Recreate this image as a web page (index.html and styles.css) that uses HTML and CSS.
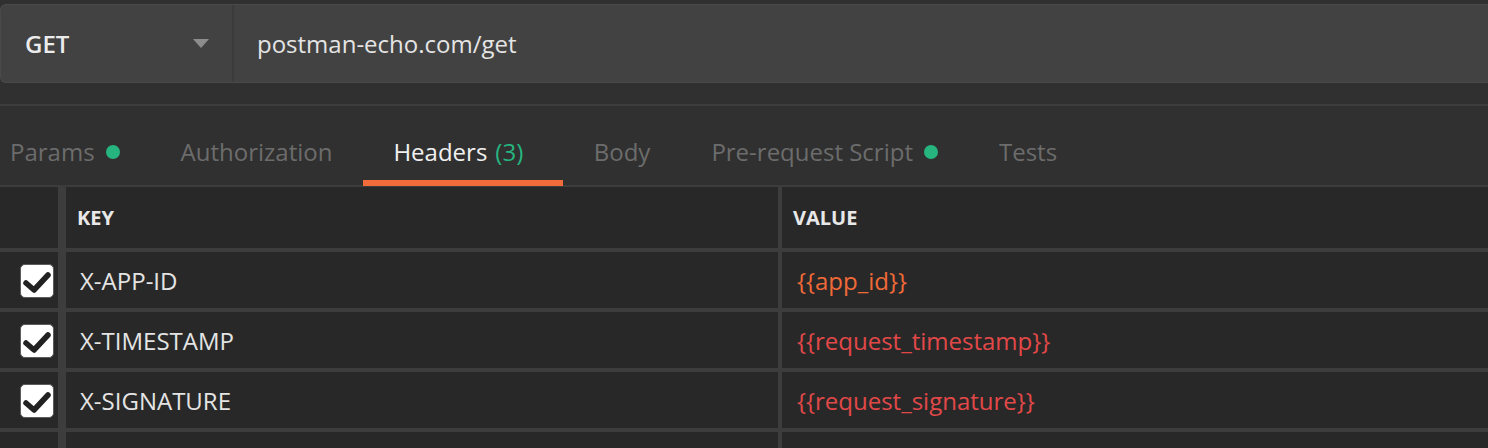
FILE: index.html
```html
<!DOCTYPE html>
<html lang="en">
<head>
<meta charset="utf-8">
<title>Request</title>
<link rel="stylesheet" href="styles.css">
</head>
<body>
<div class="app">
  <div class="request-bar">
    <div class="method">
      <span class="method-name">GET</span>
      <span class="caret"></span>
    </div>
    <div class="url">postman-echo.com/get</div>
  </div>

  <nav class="tabs">
    <div class="tab">Params<span class="dot"></span></div>
    <div class="tab">Authorization</div>
    <div class="tab active">Headers<span class="count">(3)</span></div>
    <div class="tab">Body</div>
    <div class="tab">Pre-request Script<span class="dot"></span></div>
    <div class="tab">Tests</div>
  </nav>

  <div class="table">
    <div class="row head">
      <div class="cell check"></div>
      <div class="cell key">KEY</div>
      <div class="cell value">VALUE</div>
    </div>
    <div class="row">
      <div class="cell check"><span class="box"><svg viewBox="0 0 34 34" width="34" height="34"><polyline points="6,19 14,26 28,11" /></svg></span></div>
      <div class="cell key">X-APP-ID</div>
      <div class="cell value var-found">{{app_id}}</div>
    </div>
    <div class="row">
      <div class="cell check"><span class="box"><svg viewBox="0 0 34 34" width="34" height="34"><polyline points="6,19 14,26 28,11" /></svg></span></div>
      <div class="cell key">X-TIMESTAMP</div>
      <div class="cell value var-missing">{{request_timestamp}}</div>
    </div>
    <div class="row">
      <div class="cell check"><span class="box"><svg viewBox="0 0 34 34" width="34" height="34"><polyline points="6,19 14,26 28,11" /></svg></span></div>
      <div class="cell key">X-SIGNATURE</div>
      <div class="cell value var-missing">{{request_signature}}</div>
    </div>
    <div class="row empty">
      <div class="cell check"></div>
      <div class="cell key"></div>
      <div class="cell value"></div>
    </div>
  </div>
</div>
</body>
</html>
```

FILE: styles.css
```css
* { box-sizing: border-box; }

html, body {
  margin: 0;
  padding: 0;
  background: #303030;
  overflow: hidden;
}

body {
  font-family: "Open Sans", "Noto Sans", sans-serif;
  font-size: 24px;
  color: #e6e6e6;
  width: 1488px;
  height: 448px;
}

.app {
  display: flex;
  flex-direction: column;
  padding-top: 4px;
}

/* request bar */
.request-bar {
  display: flex;
  height: 79px;
  background: #424242;
  border: 1px solid #4a4a4a;
  border-right: none;
  border-radius: 6px 0 0 6px;
}

.method {
  width: 233px;
  flex: none;
  display: flex;
  align-items: center;
  justify-content: space-between;
  padding: 0 23px 0 24px;
  border-right: 2px solid #3b3b3b;
}

.method-name {
  font-weight: 600;
  color: #ececec;
}

.caret {
  width: 0;
  height: 0;
  border-left: 8px solid transparent;
  border-right: 8px solid transparent;
  border-top: 9px solid #8d8d8d;
}

.url {
  flex: 1;
  display: flex;
  align-items: center;
  padding-left: 23px;
  color: #e4e4e4;
}

/* tabs */
.tabs {
  margin-top: 21px;
  border-top: 2px solid #3c3c3c;
  border-bottom: 2px solid #3c3c3c;
  height: 83px;
  display: flex;
  margin-left: -20.5px;
  padding-top: 12px;
}

.tab {
  position: relative;
  display: flex;
  align-items: center;
  padding: 0 30.5px;
  color: #6c6c6c;
  white-space: nowrap;
}

.tab.active {
  color: #f0f0f0;
  padding-right: 40px;
}

.tab.active::after {
  content: "";
  position: absolute;
  left: 0;
  right: 0;
  bottom: -1px;
  height: 6px;
  background: #f26b3a;
}

.dot {
  width: 14px;
  height: 14px;
  border-radius: 50%;
  background: #26b47f;
  margin-left: 11px;
}

.count {
  color: #26b47f;
  margin-left: 8px;
}

/* table */
.table {
  background: #282828;
  display: flex;
  flex-direction: column;
}

.row {
  display: flex;
  flex: none;
  height: 60px;
  border-bottom: 4px solid #3d3d3d;
}

.row.head {
  height: 65px;
}

.row.empty {
  border-bottom: none;
}

.cell {
  display: flex;
  align-items: center;
}

.check {
  width: 66px;
  flex: none;
  justify-content: flex-end;
  padding-right: 4px;
  border-right: 8px solid #3d3d3d;
}

.key {
  width: 716px;
  flex: none;
  padding-left: 14px;
  border-right: 4px solid #3d3d3d;
  color: #e4e4e4;
}

.value {
  flex: 1;
  padding-left: 15px;
}

.head .cell {
  font-weight: 700;
  font-size: 20px;
  color: #e8e8e8;
  padding-left: 11px;
}

.head .check { padding-left: 0; }

.box {
  width: 34px;
  height: 34px;
  background: #ffffff;
  border: 1px solid #5c5c5c;
  border-radius: 5px;
  display: flex;
  margin-top: 2px;
}

.box svg {
  display: block;
  margin: -1px;
}

.box polyline {
  fill: none;
  stroke: #222222;
  stroke-width: 5.5;
  stroke-linecap: round;
  stroke-linejoin: round;
}

.var-found { color: #f06a38; }
.var-missing { color: #e24848; }
```
